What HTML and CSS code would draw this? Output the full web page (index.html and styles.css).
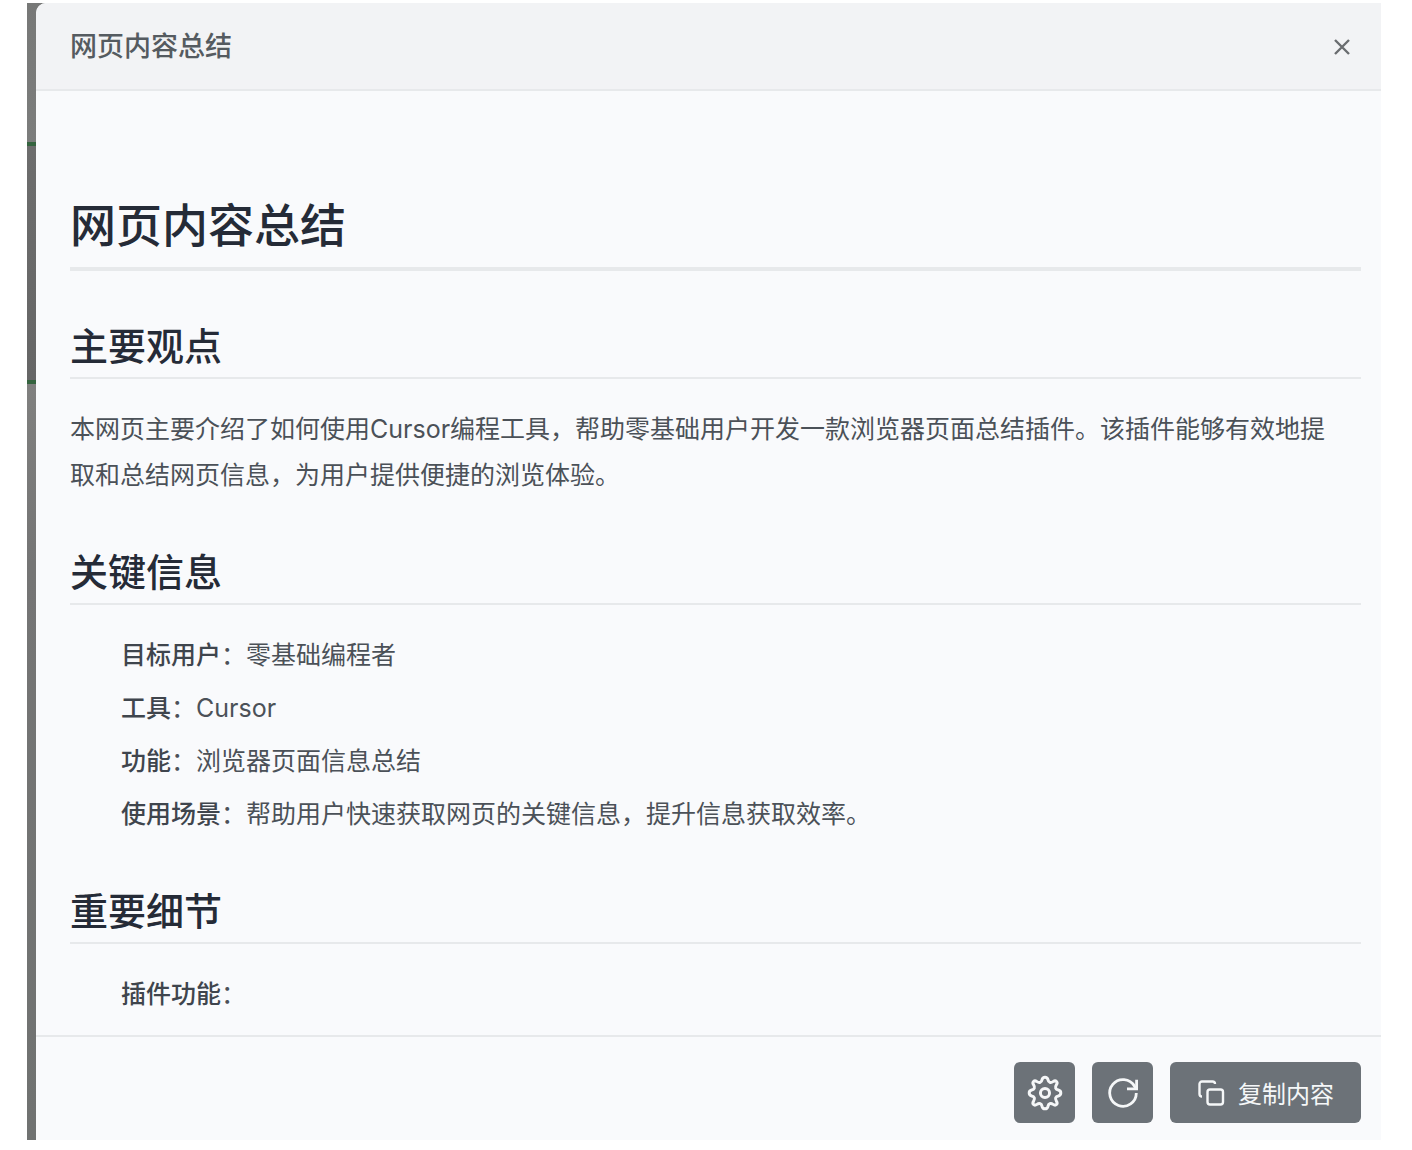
FILE: index.html
```
<!DOCTYPE html>
<html lang="zh-CN">
<head>
    <meta charset="UTF-8">
    <meta name="viewport" content="width=device-width, initial-scale=1.0">
    <title>网页内容总结</title>
    <link rel="stylesheet" href="styles.css">
</head>
<body>
    <div class="page-backdrop">
        <section class="summary-panel" aria-labelledby="panelTitle">
            <!-- Header -->
            <header class="panel-header">
                <span class="panel-title" id="panelTitle">网页内容总结</span>
                <button type="button" class="close-btn" aria-label="关闭">
                    <svg width="18" height="18" viewBox="0 0 18 18">
                        <path d="M2 2l14 14M16 2L2 16"/>
                    </svg>
                </button>
            </header>

            <!-- Summary content -->
            <main class="panel-content">
                <h1>网页内容总结</h1>

                <h2>主要观点</h2>
                <p>本网页主要介绍了如何使用Cursor编程工具，帮助零基础用户开发一款浏览器页面总结插件。该插件能够有效地提取和总结网页信息，为用户提供便捷的浏览体验。</p>

                <h2>关键信息</h2>
                <ul>
                    <li><strong>目标用户</strong>：零基础编程者</li>
                    <li><strong>工具</strong>：Cursor</li>
                    <li><strong>功能</strong>：浏览器页面信息总结</li>
                    <li><strong>使用场景</strong>：帮助用户快速获取网页的关键信息，提升信息获取效率。</li>
                </ul>

                <h2>重要细节</h2>
                <ul>
                    <li><strong>插件功能</strong>：</li>
                </ul>
            </main>

            <!-- Actions -->
            <footer class="panel-footer">
                <button type="button" class="action-btn icon-btn" aria-label="设置">
                    <svg width="42" height="42" viewBox="0 0 24 24" stroke-width="1.7">
                        <path d="M10.3 4.4C10.8 2.5 13.200 2.500 13.700 4.400C14 6 15.300 6.400 16.600 5.500C18.200 4.400 19.600 5.800 18.500 7.400C17.600 8.700 18 10 19.600 10.300C21.500 10.800 21.500 13.200 19.600 13.700C18 14 17.600 15.300 18.500 16.600C19.600 18.200 18.200 19.600 16.600 18.500C15.300 17.600 14 18 13.700 19.600C13.200 21.500 10.800 21.500 10.300 19.600C10 18 8.700 17.600 7.400 18.500C5.800 19.600 4.400 18.200 5.500 16.600C6.400 15.300 6 14 4.400 13.700C2.500 13.200 2.500 10.800 4.400 10.300C6 10 6.400 8.700 5.500 7.400C4.400 5.800 5.800 4.400 7.400 5.500C8.700 6.400 10 6 10.300 4.400Z"/>
                        <circle cx="12" cy="12" r="2.6"/>
                    </svg>
                </button>
                <button type="button" class="action-btn icon-btn" aria-label="刷新">
                    <svg width="36" height="36" viewBox="0 0 36 36" stroke-width="2.8">
                        <path d="M31.300 18A13.300 13.300 0 1 1 29.500 11.300L31 13.500"/>
                        <path d="M31.600 4.800v9h-9.600"/>
                    </svg>
                </button>
                <button type="button" class="action-btn copy-btn">
                    <svg width="28" height="28" viewBox="0 0 28 28" stroke-width="2.400">
                        <rect x="10.500" y="10.500" width="15.500" height="15" rx="2.500"/>
                        <path d="M5 17.500a2.500 2.500 0 0 1-2.500-2.500V5a2.500 2.500 0 0 1 2.500-2.500H15.500a2.500 2.500 0 0 1 2.500 2.500"/>
                    </svg>
                    复制内容
                </button>
            </footer>
        </section>
    </div>
</body>
</html>
```
FILE: styles.css
```
:root {
    --text-dark: #252b37;
    --text-body: #4b5158;
    --border-color: #e7e9eb;
    --button-color: #6c7278;
}

* {
    margin: 0;
    padding: 0;
    box-sizing: border-box;
}

body {
    height: 100vh;
    padding: 3px 31px 10px 27px;
    background: #ffffff;
    color: var(--text-body);
    font-family: Inter, "Noto Sans CJK SC", sans-serif;
    font-size: 25px;
    line-height: 46px;
}

/* Dimmed page that stays visible beside the panel */
.page-backdrop {
    height: 100%;
    padding-left: 9px;
    background: linear-gradient(
        #777877 0, #7c7d7c 139px,
        #35643f 139px, #35643f 143px,
        #6d6d6d 143px, #666666 377px,
        #35643f 377px, #35643f 381px,
        #80807f 381px, #757575 560px,
        #707271 100%
    );
}

.summary-panel {
    display: flex;
    flex-direction: column;
    height: 100%;
    overflow: hidden;
    background: #f9fafc;
    border-top-left-radius: 10px;
}

.panel-header {
    display: flex;
    align-items: center;
    justify-content: space-between;
    padding: 21px 28px 19px 34px;
    background: #f2f3f5;
    border-bottom: 2px solid var(--border-color);
}

.panel-title {
    color: #555b60;
    font-size: 27px;
    font-weight: 500;
}

.close-btn {
    display: flex;
    padding: 2px;
    background: none;
    border: none;
    cursor: pointer;
}

svg {
    display: block;
    fill: none;
    stroke: currentColor;
}

.close-btn svg {
    color: #6a6d70;
    stroke-width: 2.4;
}

.panel-content {
    flex: 1;
    min-height: 0;
    padding: 104px 20px 0 34px;
    overflow: hidden;
}

h1, h2 {
    color: var(--text-dark);
    font-weight: 500;
}

h1 {
    margin-bottom: 52px;
    padding-bottom: 12px;
    border-bottom: 4px solid var(--border-color);
    font-size: 46px;
    line-height: 60px;
}

h2 {
    margin: 51px 0 27px;
    padding-bottom: 8px;
    border-bottom: 2px solid var(--border-color);
    font-size: 38px;
    line-height: 46px;
}

p {
    padding-right: 20px;
}

ul {
    padding-left: 51px;
    list-style: none;
}

li {
    margin-bottom: 7px;
}

strong {
    color: #3f454d;
    font-weight: 500;
}

.panel-footer {
    display: flex;
    justify-content: flex-end;
    gap: 17px;
    padding: 25px 20px 17px;
    border-top: 2px solid var(--border-color);
}

.action-btn {
    display: flex;
    align-items: center;
    justify-content: center;
    height: 61px;
    background: var(--button-color);
    border: none;
    border-radius: 6px;
    color: #f5f7f8;
    font-family: inherit;
    font-size: 24px;
    cursor: pointer;
}

.icon-btn {
    width: 61px;
}

.copy-btn {
    gap: 13px;
    padding: 0 27px;
}

.action-btn:hover {
    background: #5c6268;
}
```
